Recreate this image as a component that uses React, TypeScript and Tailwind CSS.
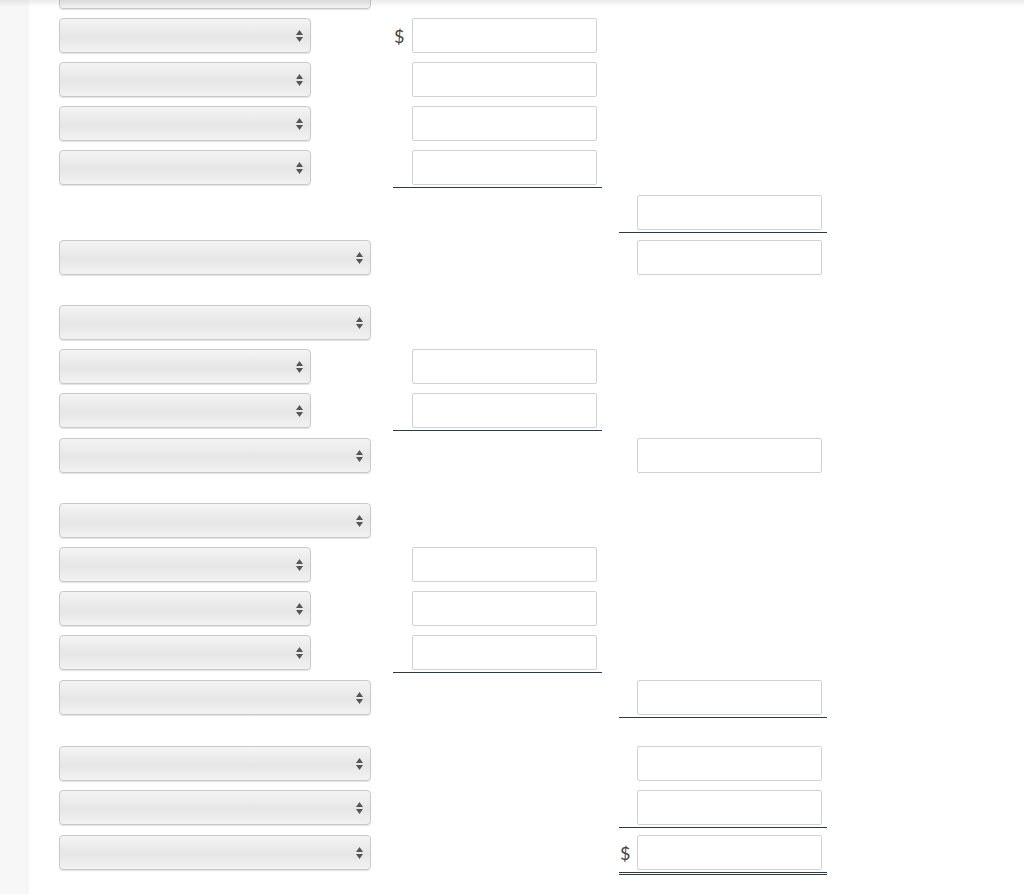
type Cell = { dollar?: boolean; line?: 'single' | 'double' };
type Row =
  | { kind: 'gap' }
  | { kind: 'row'; sel?: 'short' | 'long'; mid?: Cell; right?: Cell };

const rows: Row[] = [
  { kind: 'row', sel: 'long' },
  { kind: 'row', sel: 'short', mid: { dollar: true } },
  { kind: 'row', sel: 'short', mid: {} },
  { kind: 'row', sel: 'short', mid: {} },
  { kind: 'row', sel: 'short', mid: { line: 'single' } },
  { kind: 'row', right: { line: 'single' } },
  { kind: 'row', sel: 'long', right: {} },
  { kind: 'gap' },
  { kind: 'row', sel: 'long' },
  { kind: 'row', sel: 'short', mid: {} },
  { kind: 'row', sel: 'short', mid: { line: 'single' } },
  { kind: 'row', sel: 'long', right: {} },
  { kind: 'gap' },
  { kind: 'row', sel: 'long' },
  { kind: 'row', sel: 'short', mid: {} },
  { kind: 'row', sel: 'short', mid: {} },
  { kind: 'row', sel: 'short', mid: { line: 'single' } },
  { kind: 'row', sel: 'long', right: { line: 'single' } },
  { kind: 'gap' },
  { kind: 'row', sel: 'long', right: {} },
  { kind: 'row', sel: 'long', right: { line: 'single' } },
  { kind: 'row', sel: 'long', right: { dollar: true, line: 'double' } },
];

function Select({ size }: { size: 'short' | 'long' }) {
  return (
    <div
      className={`${size === 'short' ? 'w-[252px]' : 'w-[312px]'} h-[35px] flex items-center justify-end pr-[7px] rounded-[4px] border border-[#c9c9c9] bg-[linear-gradient(to_bottom,#f4f4f4,#e6e6e6_55%,#f2f2f2)] shadow-[0_1px_1px_rgba(0,0,0,0.12)]`}
    >
      <svg width="7" height="12" viewBox="0 0 7 12">
        <polygon points="0,5 3.5,0 7,5" fill="#555" />
        <polygon points="0,7 7,7 3.5,12" fill="#555" />
      </svg>
    </div>
  );
}

function AmountCell({ cell, width, offset }: { cell?: Cell; width: string; offset: string }) {
  const line =
    cell?.line === 'single'
      ? 'border-b border-[#2d3b45]'
      : cell?.line === 'double'
        ? 'border-b-[3px] border-double border-[#2d3b45]'
        : '';
  return (
    <div className={`${width} pt-[7px] pb-[2px] ${line}`}>
      {cell ? (
        <div className="flex items-center h-[35px]">
          <div className={`${offset} text-[18px] leading-none text-[#444] pl-[1px]`}>
            {cell.dollar ? '$' : ''}
          </div>
          <input
            type="text"
            className="w-[185px] h-[35px] bg-white border border-[#d2d2d2] rounded-[2px] outline-none"
          />
        </div>
      ) : (
        <div className="h-[35px]" />
      )}
    </div>
  );
}

export default function App() {
  return (
    <div className="relative flex h-[894px] overflow-hidden bg-white font-['Lato',sans-serif]">
      <div className="w-[29px] shrink-0 bg-[#f7f7f7]" />
      <div className="flex-1 pl-[30px] -mt-[33px]">
        {rows.map((row, i) =>
          row.kind === 'gap' ? (
            <div key={i} className="h-[21px]" />
          ) : (
            <div key={i} className="flex items-start">
              <div className="w-[334px] pt-[7px] pb-[2px]">
                {row.sel ? <Select size={row.sel} /> : <div className="h-[35px]" />}
              </div>
              <AmountCell cell={row.mid} width="w-[209px]" offset="w-[19px]" />
              <div className="w-[17px]" />
              <AmountCell cell={row.right} width="w-[208px]" offset="w-[18px]" />
            </div>
          ),
        )}
      </div>
      <div className="pointer-events-none absolute top-0 left-0 right-0 h-[7px] bg-[linear-gradient(to_bottom,rgba(0,0,0,0.08),rgba(0,0,0,0))]" />
    </div>
  );
}
